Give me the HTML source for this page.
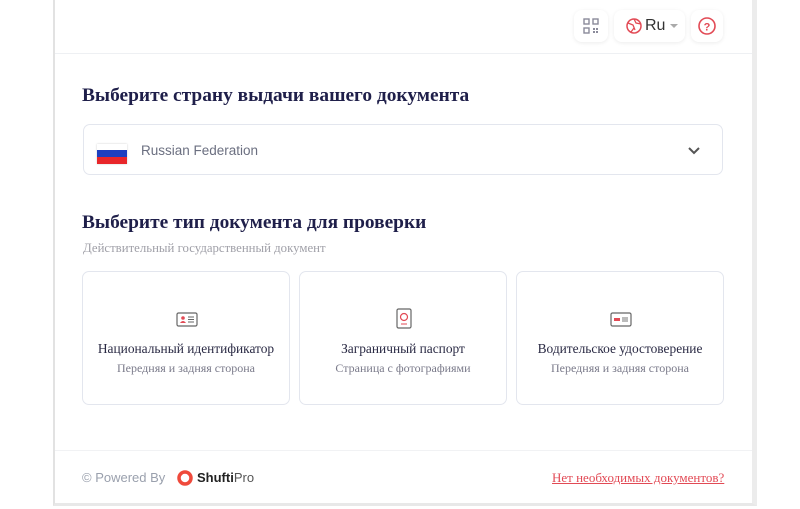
<!DOCTYPE html>
<html><head><meta charset="utf-8"><style>
*{box-sizing:border-box;margin:0;padding:0}
body{width:800px;height:509px;background:#fff;position:relative;overflow:hidden;font-family:"Liberation Serif","Noto Serif CJK SC",serif}
.frame{position:absolute;left:53px;top:-2px;width:704px;height:508px;border:1px solid #e4e4e4;border-left:2px solid #e2e2e2;border-right:5px solid #ececec;border-bottom:3px solid #e8e8e8;background:#fff}
.hdr{position:absolute;left:55px;top:53px;width:697px;height:1px;background:#eef0f3}
.btn{position:absolute;top:10px;height:32px;background:#fff;border-radius:8px;box-shadow:0 1px 4px rgba(0,0,0,.08)}
.h{position:absolute;left:82px;font-weight:bold;font-size:19.4px;color:#1f1f4a}
.sel{position:absolute;left:83px;top:124px;width:640px;height:51px;border:1px solid #e3e6ee;border-radius:7px}
.card{position:absolute;top:271px;width:208px;height:134px;border:1px solid #e3e6ee;border-radius:7px;text-align:center}
.card .t{position:absolute;top:69px;width:100%;font-size:13.4px;color:#2a2a44}
.card .s{position:absolute;top:89px;width:100%;font-size:12px;color:#7a7a8a}
.card svg{position:absolute;left:93px;top:38px}
.foot{position:absolute;left:55px;top:450px;width:697px;height:1px;background:#f1f2f4}
</style></head><body>
<div class="frame"></div>
<div class="hdr"></div>
<div class="btn" style="left:574px;width:34px"><svg width="34" height="32"><g fill="none" stroke="#8a8a9a" stroke-width="1.4"><rect x="10" y="9" width="5" height="5"/><rect x="19" y="9" width="5" height="5"/><rect x="10" y="18" width="5" height="5"/></g><g fill="#8a8a9a"><rect x="19" y="18" width="2" height="2"/><rect x="22" y="21" width="2" height="2"/><rect x="19" y="21" width="2" height="2"/><rect x="22" y="18" width="2" height="2"/></g></svg></div>
<div class="btn" style="left:614px;width:71px"><svg width="30" height="32" style="position:absolute;left:5px"><circle cx="15" cy="16" r="7" fill="none" stroke="#e24a55" stroke-width="1.5"/><path d="M9 13l5 2 2 5M15 9l2 4 5 1M12 22l3-4" fill="none" stroke="#e24a55" stroke-width="1.3"/></svg><span style="position:absolute;left:31px;top:7px;font-family:'Liberation Sans',sans-serif;font-size:16px;color:#333">Ru</span><span style="position:absolute;left:56px;top:14px;border:4px solid transparent;border-top:4px solid #aaa"></span></div>
<div class="btn" style="left:691px;width:32px"><svg width="32" height="32"><circle cx="16" cy="16" r="8" fill="none" stroke="#e24a55" stroke-width="1.6"/><text x="16" y="20.5" font-family="Liberation Sans" font-weight="bold" font-size="11" fill="#e24a55" text-anchor="middle">?</text></svg></div>
<div class="h" style="top:85px">Выберите страну выдачи вашего документа</div>
<div class="sel"><div style="position:absolute;left:13px;top:19px;width:30px;height:20px;box-shadow:0 0 2px rgba(0,0,0,.2)"><div style="height:6px;background:#fff"></div><div style="height:7px;background:#1d3fc0"></div><div style="height:7px;background:#e8262a"></div></div><span style="position:absolute;left:57px;top:18px;font-family:'Liberation Sans',sans-serif;font-size:13.5px;color:#6b6f80">Russian Federation</span><svg style="position:absolute;left:603px;top:21px" width="14" height="10"><path d="M2 2l5 5 5-5" fill="none" stroke="#555" stroke-width="2"/></svg></div>
<div class="h" style="top:212px">Выберите тип документа для проверки</div>
<div style="position:absolute;left:83px;top:241px;font-size:12.8px;color:#a0a0a8">Действительный государственный документ</div>
<div class="card" style="left:82px"><svg width="22" height="18"><rect x="1" y="3" width="20" height="13" rx="1.5" fill="none" stroke="#666" stroke-width="1.2"/><circle cx="7" cy="8" r="1.8" fill="#e24a55"/><path d="M4 13q3-4 6 0z" fill="#e24a55"/><path d="M12 7h6M12 9.5h6M12 12h6" stroke="#666"/></svg><div class="t">Национальный идентификатор</div><div class="s">Передняя и задняя сторона</div></div>
<div class="card" style="left:299px"><svg width="22" height="22" style="top:36px"><rect x="4" y="1" width="14" height="19" rx="1.5" fill="none" stroke="#666" stroke-width="1.2"/><circle cx="11" cy="9" r="3.5" fill="none" stroke="#e24a55" stroke-width="1.2"/><path d="M8 16h6" stroke="#e24a55"/></svg><div class="t">Заграничный паспорт</div><div class="s">Страница с фотографиями</div></div>
<div class="card" style="left:516px"><svg width="22" height="18"><rect x="1" y="3" width="20" height="13" rx="1.5" fill="none" stroke="#666" stroke-width="1.2"/><rect x="4" y="8" width="6" height="3" fill="#e24a55"/><rect x="12" y="7" width="6" height="5" fill="#bbb"/></svg><div class="t">Водительское удостоверение</div><div class="s">Передняя и задняя сторона</div></div>
<div class="foot"></div>
<div style="position:absolute;left:82px;top:470px;font-family:'Liberation Sans',sans-serif;font-size:13px;color:#9aa0ad">© Powered By</div>
<svg style="position:absolute;left:176px;top:469px" width="18" height="18"><circle cx="9" cy="9" r="6" fill="none" stroke="#ef4a3c" stroke-width="3.5"/></svg>
<div style="position:absolute;left:197px;top:470px;font-family:'Liberation Sans',sans-serif;font-size:13px;color:#222"><b>Shufti</b><span style="color:#555">Pro</span></div>
<div style="position:absolute;left:552px;top:470px;font-size:13px;color:#e24a55;text-decoration:underline">Нет необходимых документов?</div>
</body></html>
